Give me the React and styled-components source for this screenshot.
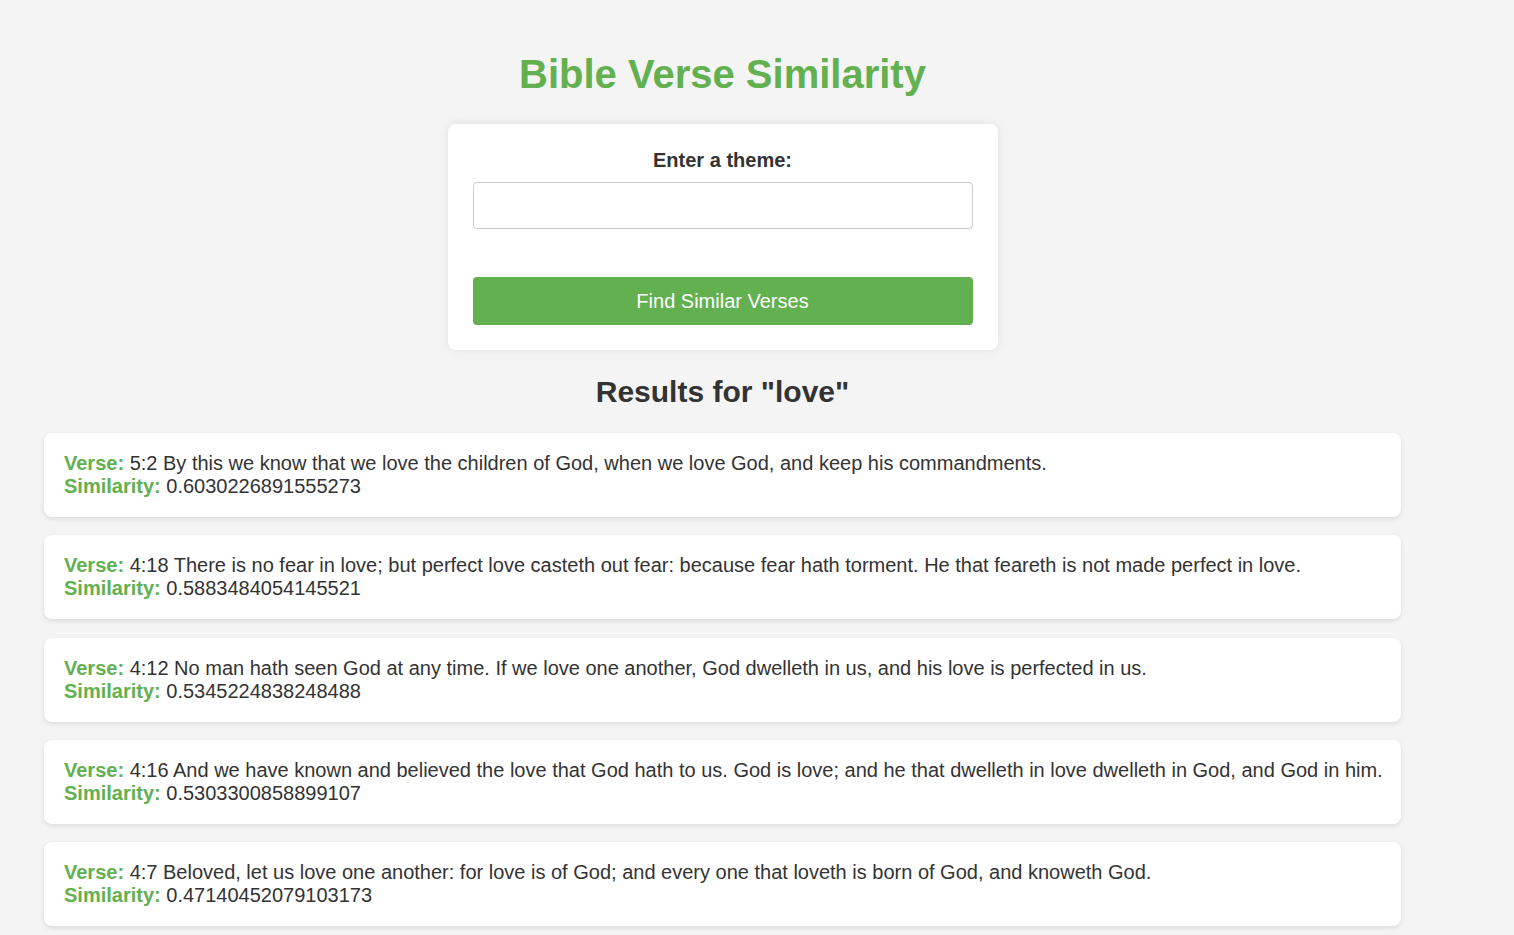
import React, { useState } from 'react';
import styled, { createGlobalStyle } from 'styled-components';

const GlobalStyle = createGlobalStyle`
  body {
    margin: 0;
    background-color: #f4f4f4;
    font-family: 'Liberation Sans', Arial, sans-serif;
    color: #333;
  }
`;

const Page = styled.div`
  width: 1445px;
  padding-top: 51px;
  padding-bottom: 20px;
  display: flex;
  flex-direction: column;
  align-items: center;
`;

const Title = styled.h1`
  margin: 0;
  font-size: 40px;
  line-height: 46px;
  font-weight: bold;
  color: #62b04f;
`;

const FormCard = styled.form`
  margin-top: 27px;
  width: 550px;
  box-sizing: border-box;
  padding: 25px;
  background: #fff;
  border-radius: 8px;
  box-shadow: 0 0 10px rgba(0, 0, 0, 0.08);
  display: flex;
  flex-direction: column;
`;

const Label = styled.label`
  font-size: 20px;
  line-height: 23px;
  font-weight: bold;
  text-align: center;
`;

const Input = styled.input`
  margin-top: 10px;
  height: 47px;
  box-sizing: border-box;
  padding: 0 12px;
  font-size: 20px;
  font-family: inherit;
  border: 1px solid #ccc;
  border-radius: 4px;
  outline: none;
`;

const Button = styled.button`
  margin-top: 48px;
  height: 48px;
  border: none;
  border-radius: 4px;
  background-color: #62b04f;
  color: #fff;
  font-size: 20px;
  font-family: inherit;
  cursor: pointer;
`;

const ResultsTitle = styled.h2`
  margin: 25px 0 0;
  font-size: 30px;
  line-height: 34px;
  font-weight: bold;
`;

const ResultsList = styled.div`
  align-self: stretch;
  margin: 24px 44px 0;
  display: flex;
  flex-direction: column;
  gap: 18.25px;
`;

const ResultCard = styled.div`
  background: #fff;
  border-radius: 8px;
  padding: 19px 12px 19px 20px;
  box-shadow: 0 2px 5px rgba(0, 0, 0, 0.1);
  font-size: 20px;
  line-height: 23px;
`;

const Key = styled.strong`
  color: #62b04f;
`;

const results = [
  {
    verse: '5:2 By this we know that we love the children of God, when we love God, and keep his commandments.',
    similarity: '0.6030226891555273',
  },
  {
    verse: '4:18 There is no fear in love; but perfect love casteth out fear: because fear hath torment. He that feareth is not made perfect in love.',
    similarity: '0.5883484054145521',
  },
  {
    verse: '4:12 No man hath seen God at any time. If we love one another, God dwelleth in us, and his love is perfected in us.',
    similarity: '0.5345224838248488',
  },
  {
    verse: '4:16 And we have known and believed the love that God hath to us. God is love; and he that dwelleth in love dwelleth in God, and God in him.',
    similarity: '0.5303300858899107',
  },
  {
    verse: '4:7 Beloved, let us love one another: for love is of God; and every one that loveth is born of God, and knoweth God.',
    similarity: '0.47140452079103173',
  },
];

const App = () => {
  const [theme, setTheme] = useState('');

  return (
    <Page>
      <GlobalStyle />
      <Title>Bible Verse Similarity</Title>
      <FormCard onSubmit={(e) => e.preventDefault()}>
        <Label htmlFor='theme'>Enter a theme:</Label>
        <Input id='theme' value={theme} onChange={(e) => setTheme(e.target.value)} />
        <Button type='submit'>Find Similar Verses</Button>
      </FormCard>
      <ResultsTitle>Results for "love"</ResultsTitle>
      <ResultsList>
        {results.map((r) => (
          <ResultCard key={r.verse}>
            <Key>Verse:</Key> {r.verse}
            <br />
            <Key>Similarity:</Key> {r.similarity}
          </ResultCard>
        ))}
      </ResultsList>
    </Page>
  );
};

export default App;
